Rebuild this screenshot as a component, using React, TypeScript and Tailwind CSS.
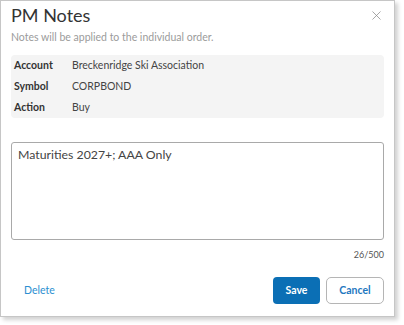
import { X } from 'lucide-react';

const rows = [
  { label: 'Account', value: 'Breckenridge Ski Association' },
  { label: 'Symbol', value: 'CORPBOND' },
  { label: 'Action', value: 'Buy' },
];

export default function App() {
  return (
    <div className="w-[404px] h-[325px] bg-white" style={{ fontFamily: 'Lato, "Open Sans", sans-serif' }}>
      <div className="w-[395px] h-[317px] border border-[#c6c6c6] bg-white shadow-[3px_3px_4px_rgba(0,0,0,0.18)] flex flex-col px-[10px]">
        {/* Header */}
        <div className="flex items-start justify-between pt-[1px]">
          <h1 className="text-[18px] leading-[26px] text-[#333]">PM Notes</h1>
          <button className="mt-[6px] text-[#8a8a8a]">
            <X size={15} strokeWidth={1.2} />
          </button>
        </div>
        <p className="text-[10.5px] leading-[14px] text-[#9b9b9b] mt-[2px]">
          Notes will be applied to the individual order.
        </p>

        {/* Order info */}
        <div className="mt-[11px] bg-[#f4f4f4] rounded-[4px] px-[3px] flex flex-col">
          {rows.map((r) => (
            <div key={r.label} className="flex h-[21px] items-center text-[10.5px]">
              <span className="w-[58px] font-bold text-[#333]">{r.label}</span>
              <span className="text-[#444]">{r.value}</span>
            </div>
          ))}
        </div>

        {/* Note input */}
        <textarea
          className="mt-[24px] h-[98px] w-full resize-none border border-[#a9a9a9] rounded-[3px] px-[6px] py-[3px] text-[12.3px] leading-[18px] text-[#444] outline-none"
          defaultValue="Maturities 2027+; AAA Only"
        />
        <div className="text-right text-[9px] text-[#555] mt-[9px] leading-[12px]">26/500</div>

        {/* Footer */}
        <div className="flex items-center justify-between mt-[16px]">
          <button className="ml-[13px] text-[10.5px] text-[#2b8fd1]">Delete</button>
          <div className="flex gap-[6px]">
            <button className="w-[47px] h-[27px] rounded-[4px] bg-[#0b6fb5] text-white text-[10.5px] font-bold">
              Save
            </button>
            <button className="w-[58px] h-[27px] rounded-[5px] border border-[#b5b5b5] bg-white text-[#1f78bf] text-[10.5px] font-bold">
              Cancel
            </button>
          </div>
        </div>
      </div>
    </div>
  );
}
